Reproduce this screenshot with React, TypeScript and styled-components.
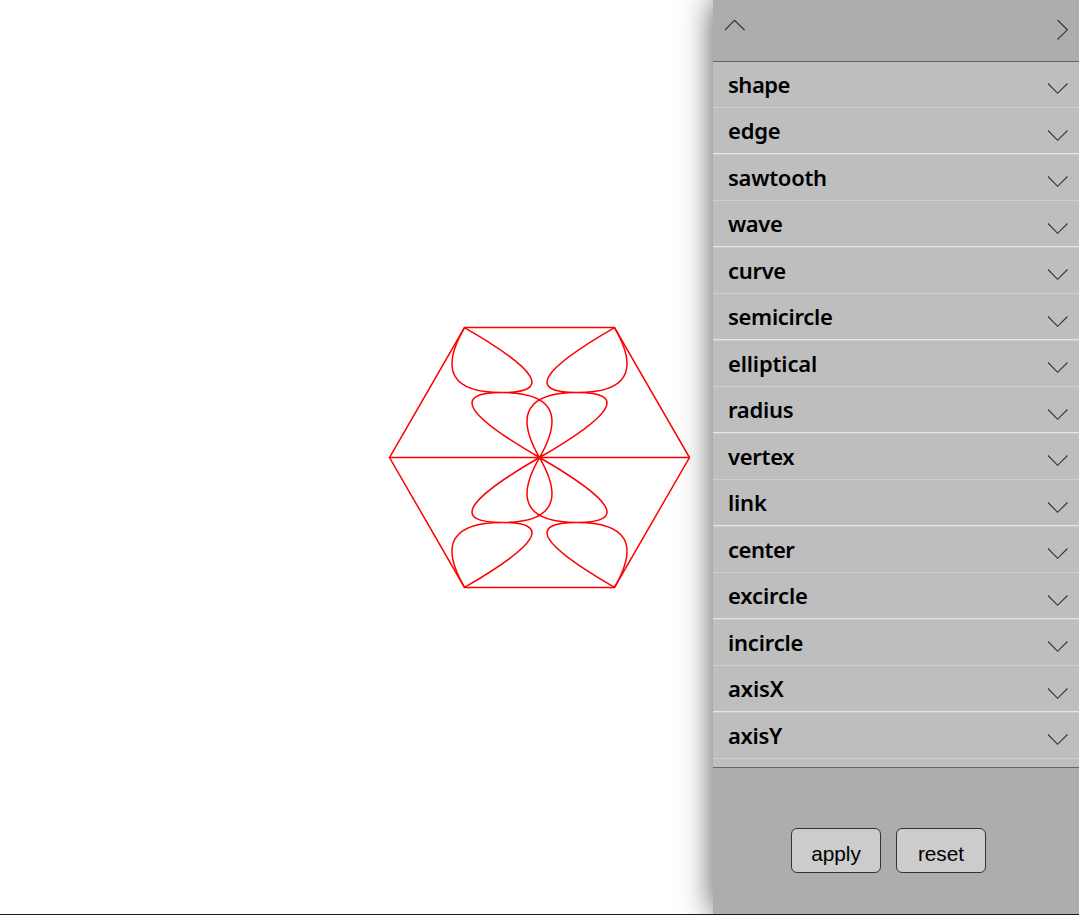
import React from "react";
import styled, { createGlobalStyle } from "styled-components";

const GlobalStyle = createGlobalStyle`
  * { box-sizing: border-box; }
  html, body { margin: 0; padding: 0; overflow: hidden; background: #fff; }
`;

const Page = styled.div`
  display: grid;
  grid-template-columns: 713px 366px;
  width: 1079px;
  height: 915px;
  overflow: hidden;
  border-bottom: 1px solid #1b1725;
  background: #fff;
`;

const Canvas = styled.main`
  display: flex;
  padding: 307px 0 0 369px;
`;

const Drawing = styled.svg`
  display: block;
  flex: none;
  fill: none;
  stroke: #f00;
  stroke-width: 1.5;
`;

const Panel = styled.aside`
  display: flex;
  flex-direction: column;
  height: 914px;
  position: relative;
  background: #adadad;
  box-shadow: 0 0 30px #555;
`;

const Header = styled.header`
  display: flex;
  justify-content: space-between;
  height: 62px;
  padding: 18px 10px 0 11px;
  border-bottom: 1px solid #666;
`;

const List = styled.ul`
  flex: none;
  height: 706px;
  margin: 0;
  padding: 0;
  overflow: hidden;
  list-style: none;
  background: #bebebe;
  border-bottom: 1px solid #666;
`;

const Row = styled.li<{ $even: boolean }>`
  display: flex;
  justify-content: space-between;
  height: ${(p) => (p.$even ? 47 : 46)}px;
  padding: 0 10px 0 15px;
  border-bottom: 1px solid ${(p) => (p.$even ? "#cacaca" : "#cfcfcf")};
  box-shadow: ${(p) => (p.$even ? "inset 0 -1px #e6e6e6" : "none")};
`;

const Label = styled.span<{ $spacing: number }>`
  font: 600 22px/44px "Noto Sans", "Open Sans", sans-serif;
  letter-spacing: ${(p) => p.$spacing}px;
  color: #000;
`;

const Chevron = styled.svg<{ $top?: number }>`
  display: block;
  flex: none;
  margin-top: ${(p) => p.$top ?? 0}px;
  fill: none;
  stroke: #333;
  stroke-width: 1.1;
`;

const Footer = styled.footer`
  display: flex;
  justify-content: center;
  gap: 15px;
  padding: 60px 15px 0 0;
`;

const Button = styled.button`
  width: 90px;
  height: 45px;
  padding: 6px 0 0;
  border: 1px solid #333;
  border-radius: 6px;
  background: #ccc;
  color: #000;
  font: 20.8px/24px "Liberation Sans", Arial, sans-serif;
`;

// Section name and its letter spacing.
const sections: [string, number][] = [
  ["shape", -0.5],
  ["edge", -0.2],
  ["sawtooth", -0.27],
  ["wave", -0.4],
  ["curve", -0.33],
  ["semicircle", -0.3],
  ["elliptical", -0.15],
  ["radius", -0.25],
  ["vertex", -0.3],
  ["link", -0.2],
  ["center", -0.5],
  ["excircle", -0.12],
  ["incircle", -0.2],
  ["axisX", -0.15],
  ["axisY", -0.3],
];

const R = 150;
const H = (R * Math.sqrt(3)) / 2;

// Two mirrored S curves from the centre to the vertex in the (sx, sy) quadrant.
const petal = (sx: number, sy: number) => {
  const y = (sy * H) / 2;
  const mid = (sx * R) / 4;
  return [1, -1]
    .map((d) => `M0 0Q${mid + (d * R) / 2} ${y} ${mid} ${y}T${(sx * R) / 2} ${sy * H}`)
    .join("");
};

export default function App() {
  return (
    <>
      <GlobalStyle />
      <Page>
        <Canvas>
          <Drawing width="341" height="301" viewBox="-170.5 -150.5 341 301">
            <path d={`M${-R} 0L${-R / 2} ${-H}H${R / 2}L${R} 0L${R / 2} ${H}H${-R / 2}Z`} />
            <path d={`M${-R} 0H${R}`} />
            <path d={petal(-1, -1) + petal(1, -1) + petal(1, 1) + petal(-1, 1)} />
          </Drawing>
        </Canvas>
        <Panel>
          <Header>
            <Chevron width="22" height="14">
              <path d="M1 12L10.5 2.3L20.5 12" />
            </Chevron>
            <Chevron width="14" height="24">
              <path d="M2.5 2L12.3 11.8L2.5 21.5" />
            </Chevron>
          </Header>
          <List>
            {sections.map(([name, spacing], i) => (
              <Row key={name} $even={i % 2 === 1}>
                <Label $spacing={spacing}>{name}</Label>
                <Chevron width="22" height="14" $top={i % 2 ? 21 : 20}>
                  <path d="M1 1.5L10.6 11.3L20.5 1.5" />
                </Chevron>
              </Row>
            ))}
          </List>
          <Footer>
            <Button>apply</Button>
            <Button>reset</Button>
          </Footer>
        </Panel>
      </Page>
    </>
  );
}
